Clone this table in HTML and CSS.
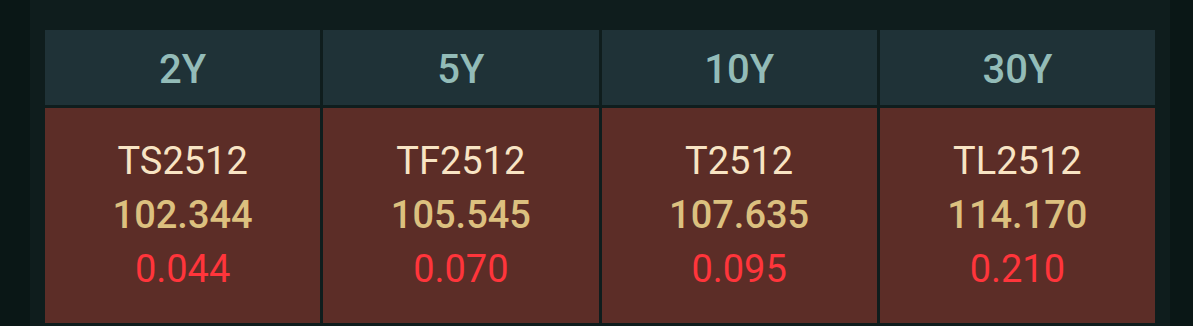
FILE: index.html
```html
<!DOCTYPE html>
<html>
<head>
<meta charset="utf-8">
<link rel="stylesheet" href="styles.css">
</head>
<body>
<div class="page">
  <div class="panel">
    <div class="grid">
      <div class="head">2Y</div>
      <div class="head">5Y</div>
      <div class="head">10Y</div>
      <div class="head">30Y</div>
      <div class="cell">
        <div class="name">TS2512</div>
        <div class="price">102.344</div>
        <div class="chg">0.044</div>
      </div>
      <div class="cell">
        <div class="name">TF2512</div>
        <div class="price">105.545</div>
        <div class="chg">0.070</div>
      </div>
      <div class="cell">
        <div class="name">T2512</div>
        <div class="price">107.635</div>
        <div class="chg">0.095</div>
      </div>
      <div class="cell">
        <div class="name">TL2512</div>
        <div class="price">114.170</div>
        <div class="chg">0.210</div>
      </div>
    </div>
  </div>
</div>
</body>
</html>
```

FILE: styles.css
```css
html, body {
  margin: 0;
  padding: 0;
  background: #0a1716;
  font-family: Roboto, "Liberation Sans", sans-serif;
}
.page {
  width: 1193px;
  height: 326px;
  padding: 0 23px 0 30px;
  box-sizing: border-box;
  overflow: hidden;
}
.panel {
  background: #0f1d1d;
  height: 326px;
  padding: 30px 15px 3px 15px;
  box-sizing: border-box;
}
.grid {
  display: grid;
  grid-template-columns: repeat(4, 1fr);
  grid-template-rows: 75px 215px;
  gap: 3px;
}
.head {
  background: #1f3237;
  color: #93bcb8;
  font-size: 40px;
  font-weight: 500;
  display: flex;
  align-items: center;
  justify-content: center;
  padding-top: 3px;
}
.cell {
  background: #5c2d27;
  display: flex;
  flex-direction: column;
  align-items: center;
  justify-content: center;
  font-size: 38px;
  line-height: 54px;
  padding-bottom: 1px;
}
.name {
  color: #f8e4c4;
}
.price {
  color: #dcc07f;
  font-weight: 500;
}
.chg {
  color: #ff353b;
}
```
